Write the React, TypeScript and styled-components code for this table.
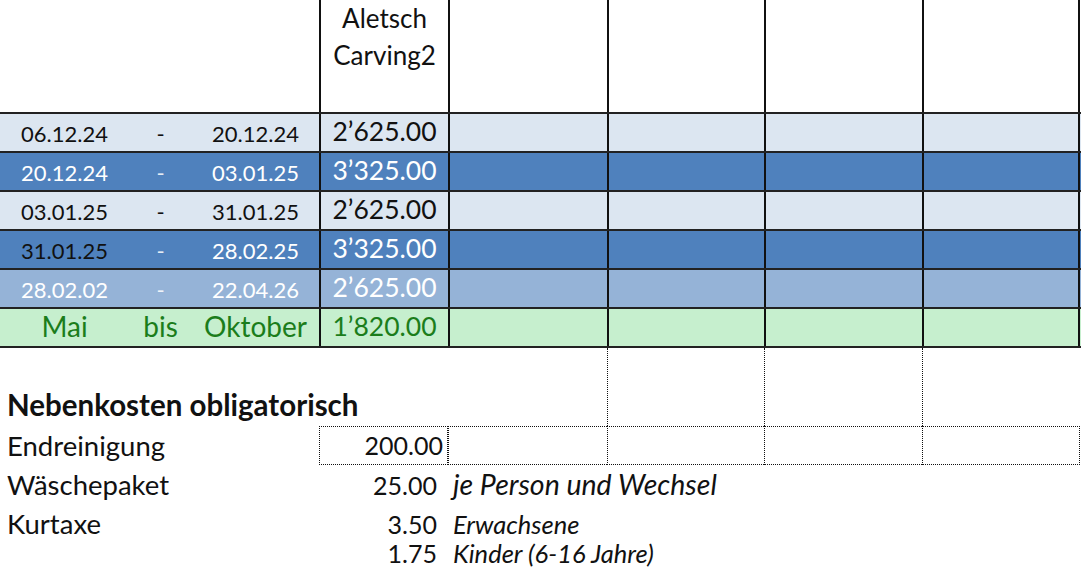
import styled, { createGlobalStyle } from 'styled-components'

type Tone = 'light' | 'dark' | 'mid' | 'green'

const tones: Record<Tone, { bg: string; fg: string }> = {
  light: { bg: '#dce6f1', fg: '#111' },
  dark: { bg: '#4f81bd', fg: '#fff' },
  mid: { bg: '#95b3d7', fg: '#fff' },
  green: { bg: '#c6efce', fg: '#1b7d1b' },
}

const seasons: { from: string; sep: string; to: string; price: string; tone: Tone; fromColor?: string }[] = [
  { from: '06.12.24', sep: '-', to: '20.12.24', price: '2’625.00', tone: 'light' },
  { from: '20.12.24', sep: '-', to: '03.01.25', price: '3’325.00', tone: 'dark' },
  { from: '03.01.25', sep: '-', to: '31.01.25', price: '2’625.00', tone: 'light' },
  { from: '31.01.25', sep: '-', to: '28.02.25', price: '3’325.00', tone: 'dark', fromColor: '#111' },
  { from: '28.02.02', sep: '-', to: '22.04.26', price: '2’625.00', tone: 'mid' },
  { from: 'Mai', sep: 'bis', to: 'Oktober', price: '1’820.00', tone: 'green' },
]

const extras = [
  { label: 'Endreinigung', amount: '200.00', note: '', boxed: true },
  { label: 'Wäschepaket', amount: '25.00', note: 'je Person und Wechsel', small: false },
  { label: 'Kurtaxe', amount: '3.50', note: 'Erwachsene', small: true },
  { label: '', amount: '1.75', note: 'Kinder (6-16 Jahre)', small: true },
]

export default function App() {
  return (
    <Sheet>
      <GlobalStyle />
      <HeaderRow>
        <HeaderBlank />
        <HeaderCell>
          Aletsch
          <br />
          Carving2
        </HeaderCell>
        <EmptyCell />
        <EmptyCell />
        <EmptyCell />
        <EmptyCell $last />
      </HeaderRow>

      <Table>
        {seasons.map((s, i) => {
          const tone = tones[s.tone]
          const big = s.tone === 'green'
          return (
            <DataRow key={i} $bg={tone.bg}>
              <DateCell $color={s.fromColor ?? tone.fg} $big={big}>{s.from}</DateCell>
              <DateCell $color={tone.fg} $big={big} $faint={!big && s.tone !== 'light'}>{s.sep}</DateCell>
              <DateCell $color={tone.fg} $big={big}>{s.to}</DateCell>
              <AmountCell $color={tone.fg}>{s.price}</AmountCell>
              <EmptyCell />
              <EmptyCell />
              <EmptyCell />
              <EmptyCell $last />
            </DataRow>
          )
        })}
      </Table>

      <Extras>
        <Guide $col={6} />
        <Guide $col={7} />
        <Guide $col={8} />
        <Heading>Nebenkosten obligatorisch</Heading>
        {extras.map((e, i) => {
          const row = i + 3
          return [
            <Label key={`l${i}`} $row={row}>{e.label}</Label>,
            <Amount key={`a${i}`} $row={row} $boxed={!!e.boxed}>{e.amount}</Amount>,
            e.boxed ? (
              [5, 6, 7, 8].map((c) => <BoxCell key={`b${c}`} $row={row} $col={c} $last={c === 8} />)
            ) : (
              <Note key={`n${i}`} $row={row} $small={!!e.small}>{e.note}</Note>
            ),
          ]
        })}
      </Extras>
    </Sheet>
  )
}

const COLS = '129px 63px 127px 129px 159px 157px 158px 158px'

const GlobalStyle = createGlobalStyle`
  html, body {
    margin: 0;
    padding: 0;
    background: #fff;
  }
  body {
    font-family: Lato, 'Liberation Sans', sans-serif;
    color: #111;
    overflow: hidden;
  }
  * {
    box-sizing: border-box;
  }
`

const Sheet = styled.div`
  width: 1081px;
  height: 573px;
  overflow: hidden;
`

const HeaderRow = styled.div`
  display: grid;
  grid-template-columns: ${COLS};
  height: 112px;
`

const HeaderBlank = styled.div`
  grid-column: 1 / span 3;
`

const HeaderCell = styled.div`
  border-left: 2px solid #111;
  text-align: center;
  font-size: 26px;
  line-height: 37px;
`

const EmptyCell = styled.div<{ $last?: boolean }>`
  border-left: 2px solid #111;
  border-right: ${({ $last }) => ($last ? '2px solid #111' : 'none')};
`

const Table = styled.div`
  border-bottom: 2px solid #222;
`

const DataRow = styled.div<{ $bg: string }>`
  display: grid;
  grid-template-columns: ${COLS};
  height: 39px;
  border-top: 2px solid #222;
  background: ${({ $bg }) => $bg};
`

const DateCell = styled.div<{ $color: string; $big: boolean; $faint?: boolean }>`
  display: flex;
  align-items: flex-end;
  justify-content: center;
  padding-bottom: ${({ $big }) => ($big ? '2px' : '4px')};
  font-size: ${({ $big }) => ($big ? '28px' : '22px')};
  line-height: 1.2;
  color: ${({ $color }) => $color};
  opacity: ${({ $faint }) => ($faint ? 0.85 : 1)};
`

const AmountCell = styled.div<{ $color: string }>`
  display: flex;
  align-items: flex-end;
  justify-content: center;
  border-left: 2px solid #111;
  padding-bottom: 3px;
  font-size: 26.5px;
  line-height: 1.2;
  color: ${({ $color }) => $color};
`

const Extras = styled.div`
  display: grid;
  grid-template-columns: ${COLS};
  grid-template-rows: 39px 39px 39px 39px 39px 29px;
`

const Guide = styled.div<{ $col: number }>`
  grid-row: 1 / span 2;
  grid-column: ${({ $col }) => $col};
  border-left: 1px dotted #111;
`

const Heading = styled.div`
  grid-row: 2;
  grid-column: 1 / span 4;
  display: flex;
  align-items: flex-end;
  padding: 0 0 4px 7px;
  font-size: 29.5px;
  font-weight: 700;
  line-height: 1.2;
  white-space: nowrap;
`

const Label = styled.div<{ $row: number }>`
  grid-row: ${({ $row }) => $row};
  grid-column: 1 / span 3;
  display: flex;
  align-items: flex-end;
  padding: 0 0 3px 7px;
  font-size: 27.5px;
  line-height: 1.2;
`

const Amount = styled.div<{ $row: number; $boxed: boolean }>`
  grid-row: ${({ $row }) => $row};
  grid-column: 4;
  display: flex;
  align-items: flex-end;
  justify-content: flex-end;
  padding: 0 ${({ $boxed }) => ($boxed ? '4px' : '11px')} 4px 0;
  font-size: 25px;
  line-height: 1.2;
  border: ${({ $boxed }) => ($boxed ? '1px dotted #111' : 'none')};
`

const BoxCell = styled.div<{ $row: number; $col: number; $last: boolean }>`
  grid-row: ${({ $row }) => $row};
  grid-column: ${({ $col }) => $col};
  border-top: 1px dotted #111;
  border-bottom: 1px dotted #111;
  border-left: 1px dotted #111;
  border-right: ${({ $last }) => ($last ? '1px dotted #111' : 'none')};
`

const Note = styled.div<{ $row: number; $small: boolean }>`
  grid-row: ${({ $row }) => $row};
  grid-column: 5 / span 4;
  display: flex;
  align-items: flex-end;
  padding: 0 0 3px 5px;
  font-size: ${({ $small }) => ($small ? '25.5px' : '28.5px')};
  font-style: italic;
  line-height: 1.2;
  white-space: nowrap;
`
